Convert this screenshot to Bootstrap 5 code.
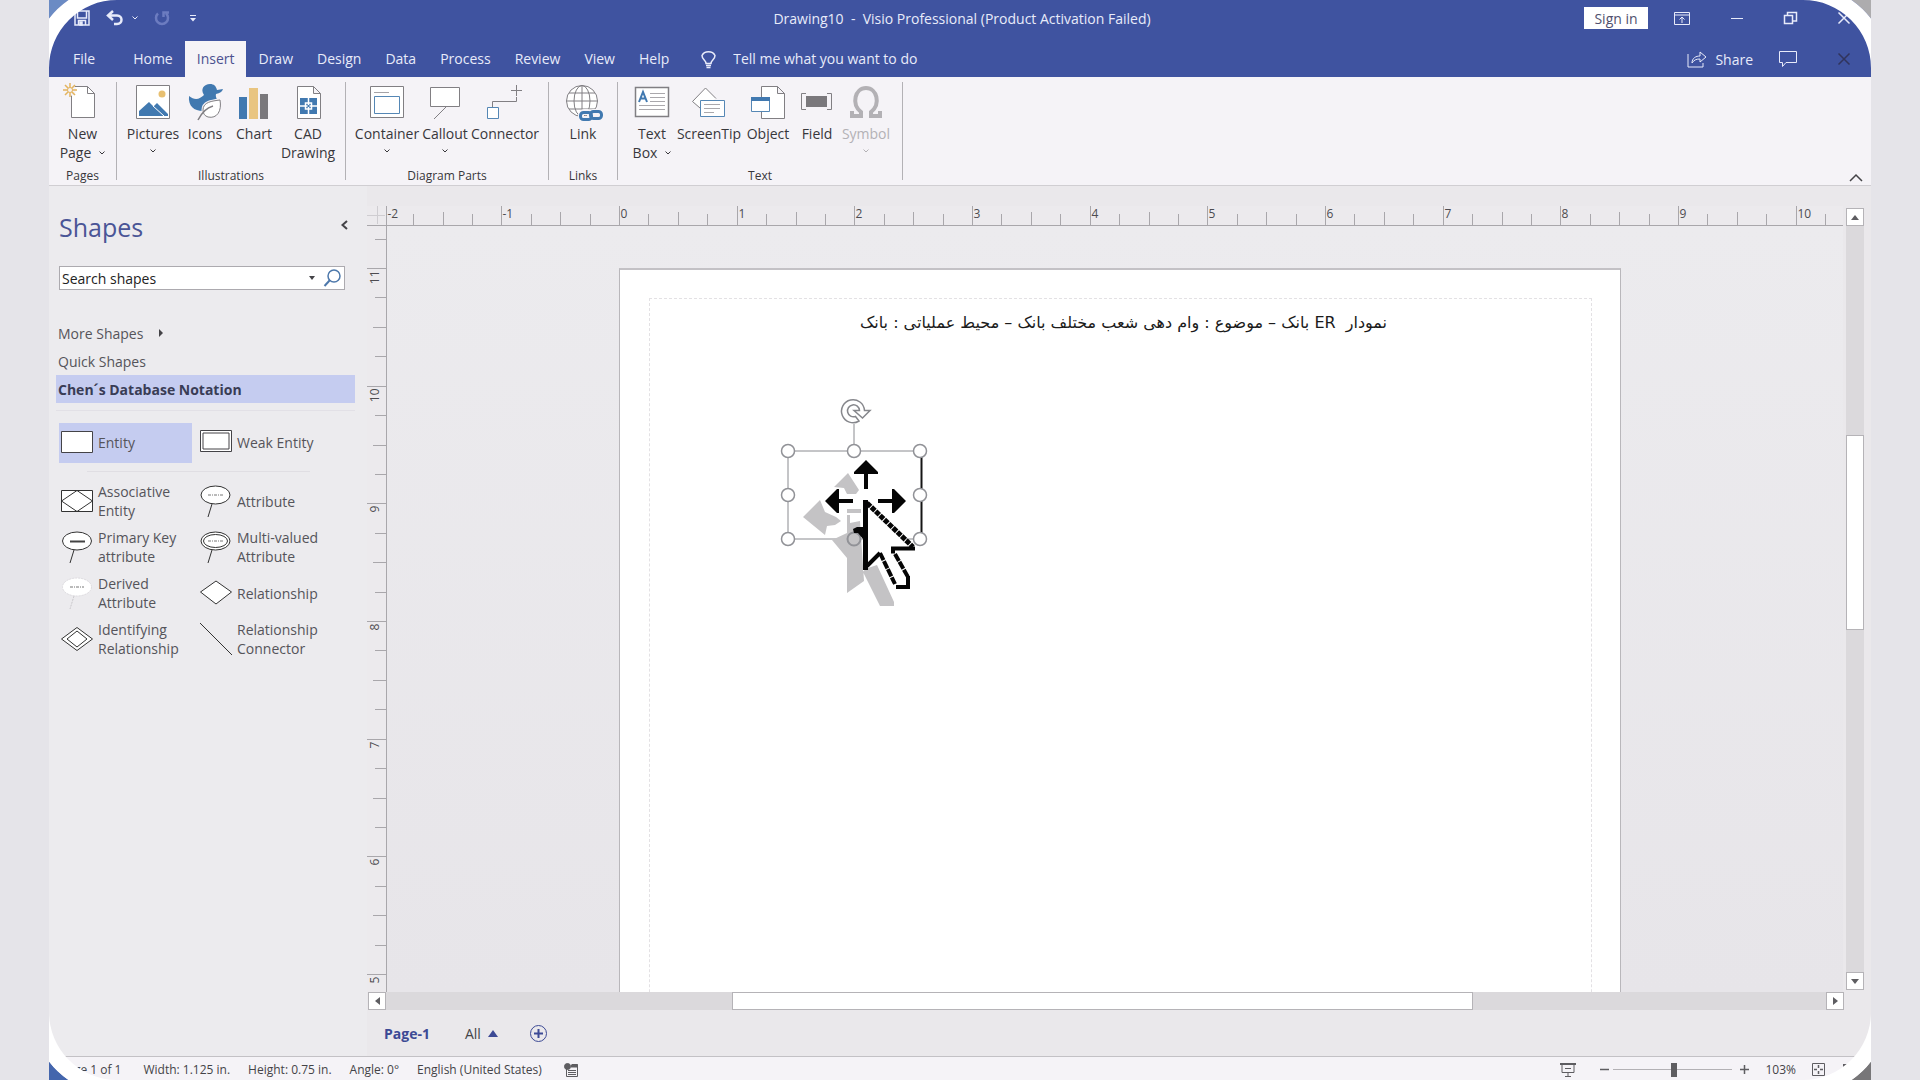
<!DOCTYPE html>
<html lang="en">
<head>
<meta charset="utf-8">
<meta name="viewport" content="width=device-width, initial-scale=1">
<title>Drawing10 - Visio Professional</title>
<link href="https://cdn.jsdelivr.net/npm/bootstrap@5.3.0/dist/css/bootstrap.min.css" rel="stylesheet">
<style>
:root{--brand:#3f53a0;--ribbon:#f5f3f7;--pane:#ecebee;--ink:#444347;--pick:#c5ccf0;--rule:#a9a7ab}
body{font-family:"Open Sans","Noto Sans",sans-serif;font-size:14px;line-height:19px;color:var(--ink);background:#e5e4e9;overflow:hidden}
svg{display:block;flex:none;overflow:visible;fill:none}
button{border:0;background:none;padding:0;color:inherit}
.stage{padding:0 49px;height:100vh}
.app-window{background:var(--pane);overflow:hidden}
.brand{background:var(--brand);color:#e8ebfa}
.title-row{height:41px;padding-bottom:5px}
.side{flex:1 1 0}
.qat{padding-left:25px}
.doc-title{white-space:pre}
.sign-in{background:#fff;color:#50506e;width:64px;height:22px}
.win-tools{padding-right:21px;gap:41px}
.gap-tool{gap:26px}
.tab-row{height:36px}
.tab-row a{color:#e8ebfa;text-decoration:none;padding:0 12px 2px;height:36px;display:flex;align-items:center}
.tab-row a.first{margin:0 14px 0 12px}
.tab-row a.active{background:var(--ribbon);color:#4b5190}
.tell{background:none;border:0;color:#e8ebfa;width:240px;padding:0 0 2px;outline:0}
.tell::placeholder{color:#e8ebfa;opacity:1}
.ribbon{background:var(--ribbon);height:109px;border-bottom:1px solid #d0ced2;padding-top:5px;color:#38373b}
.group{border-right:1px solid #b3b1b5;height:98px}
.tools{height:86px;padding-top:2px}
.tool{display:flex;flex-direction:column;align-items:center;white-space:nowrap;line-height:19px}
.tool svg.pic{width:36px;height:36px;margin-bottom:4px}
.tool svg.chev{margin-top:6px}
.caption{font-size:12px;line-height:16px;text-align:center}
.w44{width:44px}.w48{width:48px}.w50{width:50px}.w54{width:54px}.w60{width:60px}.w66{width:66px}.w70{width:70px}
.shapes-pane{width:318px;padding:25px 12px 0 7px;flex:none}
.pane-title{font-size:25px;line-height:32px;color:#4a5596;font-weight:400;padding:0 7px 0 3px}
.search-box{border:1px solid #acaaaf;background:#fff;width:286px;height:24px;margin:23px 0 0 3px}
.search-box input{border:0;outline:0;padding:0 0 0 2px;color:#222;width:100%;background:none}
.search-box input::placeholder{color:#222;opacity:1}
.stencils{margin-top:29px}
.stencils a{display:flex;align-items:center;height:28px;padding-left:2px;color:#55545a;text-decoration:none}
.stencils a.active{background:var(--pick);color:#393c55;font-weight:700}
.masters{border-top:1px solid #e2e0e6;margin-top:7px;padding:12px 0 0 3px}
.master{width:141px;height:46px;display:flex;align-items:center;gap:5px;padding:0 0 2px 2px;text-align:left;color:#55545a}
.master.top{height:40px}
.master.active{background:var(--pick);width:133px;margin-right:8px}
.divide{height:1px;background:#e0dee3;margin:8px 45px 7px 28px}
.drawing{padding-top:20px;background:#eae8eb}
.ruler-h{height:20px;border-bottom:1px solid var(--rule)}
.ruler-v{width:20px;border-right:1px solid var(--rule)}
.ruler-v,.ruler-h{overflow:hidden;background:#eceaed}
.ruler text{font-size:12px;fill:#4d4c50}
.canvas{position:relative;overflow:hidden;background:linear-gradient(#ecebee,#e7e5e9)}
.sheet{position:absolute;left:232px;top:42px;width:1002px;height:1200px;background:#fff;border:1px solid #b9b7bb;border-top:2px solid #c3c1c5;padding:28px 28px 0 29px}
.margin-box{border:1px dashed #e3e1e4;height:1100px;padding:12px 0 0 6px;text-align:center;color:#1b1b1b;font-family:"DejaVu Sans",sans-serif;font-size:16px;line-height:24px;white-space:pre}
.pick-layer{position:absolute;left:353px;top:154px}
.bar-v{width:18px;margin:0 7px 0 3px;padding:2px 0;flex:none}
.bar-h{height:18px;padding:0 27px 0 1px}
.bar-btn{background:#fff;border:1px solid #b5b3b7;width:18px;height:18px;flex:none;display:flex;align-items:center;justify-content:center}
.track{background:#dbd9dc;flex:1 1 auto}
.grip{background:#fff;border:1px solid #b5b3b7}
.bar-h .grip{width:741px;height:18px;margin-left:346px}
.bar-v .grip{height:195px;width:18px;margin-top:209px}
.page-tabs{height:46px;padding-left:17px}
.page-tabs .now{color:#3d4a95;font-weight:700}
.all-tab{margin-left:35px;gap:7px}
.status{background:var(--ribbon);border-top:1px solid #c3c1c5;height:24px;font-size:12px;padding:2px 12px 0 11px}
.readouts{gap:18px}
.zoom{appearance:none;width:119px;height:16px;background:linear-gradient(#b3b1b5,#b3b1b5) center/100% 1px no-repeat}
.zoom::-webkit-slider-thumb{appearance:none;width:6px;height:14px;background:#5e5d61}
.corner{position:absolute;width:68px;height:68px;pointer-events:none}
.flip-x{transform:scaleX(-1)}.flip-y{transform:scaleY(-1)}.flip-xy{transform:scale(-1)}
.sky{color:#6b8bc4}.fog{color:#adacae}.sea{color:#4466ad}.rock{color:#777678}
.g-pages{width:68px}.g-ill{width:229px}.g-ill .tools{padding-left:6px}.g-parts{width:203px}.g-parts .tools{padding-left:8px}.g-links{width:69px}.g-text{width:285px}.g-text .tools{padding-left:12px}
.shrink-y{min-height:0}.shrink-x{min-width:0}
.dim{color:#b3b1b5}
</style>
<script src="https://cdn.jsdelivr.net/npm/bootstrap@5.3.0/dist/js/bootstrap.bundle.min.js"></script>
</head>
<body>
<svg width="0" height="0" class="position-absolute" aria-hidden="true">
  <symbol id="chev" viewBox="0 0 6 4"><path d="M.5.5 3 3 5.500.5" fill="none" stroke="currentColor"/></symbol>
  <symbol id="ring" viewBox="0 0 68 68"><path d="M0 0H19.500Q8 8 0 18.500Z" fill="currentColor"/><path d="M19.500 0H68A68 68 0 0 0 0 68V18.500Q8 8 19.500 0Z" fill="#fff"/></symbol>
</svg>
<div class="stage">
<div class="app-window position-relative d-flex flex-column h-100">
  <header class="brand">
    <div class="title-row d-flex align-items-center">
      <div class="side qat d-flex align-items-center">
        <button aria-label="Save"><svg width="16" height="16" stroke="#e8ebfa" stroke-width="1.500"><path d="M1 1h14v14H1zM3.500 1v7h9V1M4.500 15v-4.500h7V15"/><path d="M6 12h2v3H6z" fill="#e8ebfa"/></svg></button>
        <button class="ms-3" aria-label="Undo"><svg width="18" height="16" stroke="#e8ebfa" stroke-width="2.500"><path d="M7 1 2 5.500 7 10M2 5.500h9c6 0 6 8.500 0 8.500H8"/></svg></button>
        <button class="ms-2" aria-label="Undo list"><svg width="6" height="4"><use href="#chev"/></svg></button>
        <button class="ms-3" aria-label="Redo"><svg width="16" height="16" stroke="#6c7cc0" stroke-width="2.500"><path d="M4 3.500A6 6 0 1 0 12 3.500M9.500 7V2.500H15"/></svg></button>
        <button class="ms-3 ps-1" aria-label="Customize toolbar"><svg width="6" height="8" stroke="#e8ebfa"><path d="M0 1.500h6"/><path d="m0 4 3 3.500L6 4z" fill="#e8ebfa" stroke="none"/></svg></button>
      </div>
      <div class="doc-title">Drawing10  -  Visio Professional (Product Activation Failed)</div>
      <div class="side win-tools d-flex align-items-center justify-content-end">
        <div class="d-flex align-items-center gap-tool">
          <button class="sign-in">Sign in</button>
          <button aria-label="Ribbon display"><svg width="16" height="13" stroke="#e8ebfa"><path d="M.5.5h15v12H.5zM.5 3h15M8 11V5M5.500 7.500 8 5l2.500 2.500"/></svg></button>
        </div>
        <button aria-label="Minimize"><svg width="12" height="13" stroke="#e8ebfa"><path d="M0 6.500h12"/></svg></button>
        <button aria-label="Restore"><svg width="13" height="12" stroke="#e8ebfa" stroke-width="1.500"><path d="M.5 3.500h8v8h-8zM3.500 3V.5h9V9H9"/></svg></button>
        <button aria-label="Close"><svg width="12" height="12" stroke="#e8ebfa" stroke-width="1.500"><path d="m.5.5 11 11M11.500.5l-11 11"/></svg></button>
      </div>
    </div>
    <nav class="tab-row d-flex align-items-center">
      <a class="first" href="#">File</a><a href="#">Home</a><a class="active" href="#">Insert</a><a href="#">Draw</a><a href="#">Design</a><a href="#">Data</a><a href="#">Process</a><a href="#">Review</a><a href="#">View</a><a href="#">Help</a>
      <label for="tell" class="ms-3 me-3 ps-1" aria-label="Tell me"><svg width="16" height="20" stroke="#e8ebfa" stroke-width="1.500"><path d="M5 14.500c0-3-4-4-4-8a7 6 0 0 1 13 0c0 4-4 5-4 8zM5 16.500h5M5.500 18.500h4"/></svg></label>
      <input class="tell" id="tell" type="text" placeholder="Tell me what you want to do">
      <div class="d-flex align-items-center ms-auto win-tools">
        <div class="d-flex align-items-center gap-tool">
          <button class="d-flex align-items-center gap-2"><svg width="20" height="18" stroke="#e8ebfa"><path d="M1 4v13h15v-4M5 13c0-5 4-7 8-7V2l6 5-6 5V9c-4 0-6 1-8 4z"/></svg>Share</button>
          <button aria-label="Comments"><svg width="18" height="16" stroke="#e8ebfa"><path d="M.5.5h17v11H7l-3.500 4v-4h-3z"/></svg></button>
        </div>
        <button aria-label="Close document"><svg width="12" height="12" stroke="#31345c" stroke-width="1.500"><path d="m.5.5 11 11m0-11-11 11"/></svg></button>
      </div>
    </nav>
  </header>

  <section class="ribbon d-flex position-relative">
    <div class="group g-pages">
      <div class="tools d-flex justify-content-center">
        <button class="tool"><svg class="pic" viewBox="0 0 36 36"><path d="M9.500 3.500h16l7 7v24h-23z" fill="#fff" stroke="#817f83" transform="translate(-2 -1)"/><path d="M23.500 2.500v7h7" stroke="#817f83"/><circle cx="6" cy="6" r="6" fill="#f5f3f7"/><path d="M6-1v14M-1 6h14M1 1l10 10M11 1 1 11" stroke="#e3b45f" stroke-width="1.500"/><circle cx="6" cy="6" r="2.500" fill="#f5f3f7" stroke="#e3b45f"/></svg><span>New</span><span class="d-flex align-items-center gap-2">Page <svg width="6" height="4"><use href="#chev"/></svg></span></button>
      </div>
      <div class="caption">Pages</div>
    </div>
    <div class="group g-ill">
      <div class="tools d-flex">
        <button class="tool w60"><svg class="pic" viewBox="0 0 36 36"><path d="M1.500 1.500h33v33h-33z" fill="#fff" stroke="#817f83"/><circle cx="27" cy="10" r="3.500" fill="#e8c071"/><path d="M4 32v-5l10-9 9 9-5-4 4-4 11 11v2z" fill="#4179b0"/><path d="m18 22 11 10" stroke="#fff"/></svg><span>Pictures</span><svg class="chev" width="6" height="4"><use href="#chev"/></svg></button>
        <button class="tool w44"><svg class="pic" viewBox="0 0 36 36"><path d="M2 12c6 5 11 3 15-1-4-6 0-11 6-11 4 0 6 2 7 6l6-1c-1 3-3 4-7 5-1 3 2 6 2 9-4 5-9 8-15 8C7 27 1 22 2 12z" fill="#4179b0"/><path d="M33 16c2 11-3 19-12 17-3-1-5-3-5-7 0-8 9-9 17-10zM11 36c3-6 8-12 15-14" fill="#fff" stroke="#f5f3f7" stroke-width="3"/><path d="M33 16c2 11-3 19-12 17-3-1-5-3-5-7 0-8 9-9 17-10z" fill="#fff" stroke="#817f83"/><path d="M11 36c3-6 8-12 15-14" stroke="#817f83" stroke-width="1.500"/></svg><span>Icons</span></button>
        <button class="tool w54"><svg class="pic" viewBox="0 0 36 36"><path d="M3 13h8v22H3z" fill="#4179b0"/><path d="M13 4h9v31h-9z" fill="#e9c581"/><path d="M24 10h8v25h-8z" fill="#7a787c"/></svg><span>Chart</span></button>
        <button class="tool w54"><svg class="pic" viewBox="0 0 36 36"><path d="M7.500 2.500h16l7 7v25h-23zM23.500 2.500v7h7" fill="#fff" stroke="#817f83"/><path d="M10 14h17v16H10z" fill="#4179b0"/><path d="M18.500 14v16M10 22h17M15.500 19h6v6h-6z" stroke="#fff" stroke-width="1.500"/><path d="M17.500 21h2v2h-2z" fill="#4179b0"/></svg><span>CAD</span><span>Drawing</span></button>
      </div>
      <div class="caption">Illustrations</div>
    </div>
    <div class="group g-parts">
      <div class="tools d-flex">
        <button class="tool w66"><svg class="pic" viewBox="0 0 36 36"><path d="M1.500 2.500h33v31h-33z" fill="#fff" stroke="#817f83"/><path d="M5 8.500h15" stroke="#a5a3a7"/><path d="M5.500 12.500h25v17h-25z" stroke="#5587b5"/></svg><span>Container</span><svg class="chev" width="6" height="4"><use href="#chev"/></svg></button>
        <button class="tool w50"><svg class="pic" viewBox="0 0 36 36"><path d="M3.500 3.500h29v19h-29z" fill="#fff" stroke="#817f83"/><path d="M19 23 7 35" stroke="#817f83"/></svg><span>Callout</span><svg class="chev" width="6" height="4"><use href="#chev"/></svg></button>
        <button class="tool w70"><svg class="pic" viewBox="0 0 36 36"><path d="M5.500 23v-5.500h24V13M29.500 1v11M24 6.500h11" stroke="#817f83"/><path d="M.5 23.500h11v11H.5z" fill="#fff" stroke="#5587b5"/></svg><span>Connector</span></button>
      </div>
      <div class="caption">Diagram Parts</div>
    </div>
    <div class="group g-links">
      <div class="tools d-flex justify-content-center">
        <button class="tool"><svg class="pic" viewBox="0 0 36 36"><g stroke="#817f83"><circle cx="17" cy="17" r="15.500" fill="#fff"/><ellipse cx="17" cy="17" rx="8" ry="15.500"/><path d="M17 1.500v31M1.500 17h31M4 9h26M4 25h26"/></g><g stroke="#f5f3f7" stroke-width="6"><rect x="16" y="28" width="10" height="7" rx="3"/><rect x="25" y="28" width="10" height="7" rx="3"/></g><g stroke="#4179b0" stroke-width="3"><rect x="15.500" y="28.500" width="11" height="7" rx="3"/><rect x="25.500" y="27.500" width="11" height="7" rx="3"/></g></svg><span>Link</span></button>
      </div>
      <div class="caption">Links</div>
    </div>
    <div class="group g-text">
      <div class="tools d-flex">
        <button class="tool w44"><svg class="pic" viewBox="0 0 36 36"><path d="M1.500 3.500h33v29h-33z" fill="#fff" stroke="#817f83" stroke-width="1.500"/><path d="m5 18 4-10 4 10M6.500 14.500h5" stroke="#4179b0" stroke-width="2"/><path d="M16 9.500h15M16 13.500h15M16 17.500h15M5 21.500h26M5 25.500h26" stroke="#aaa8ac"/></svg><span>Text</span><span class="d-flex align-items-center gap-2">Box <svg width="6" height="4"><use href="#chev"/></svg></span></button>
        <button class="tool w70"><svg class="pic" viewBox="0 0 36 36"><path d="M9 24 1.500 17.500 14.500 4 25 14.500" fill="#fff" stroke="#817f83"/><path d="M9.500 16.500h24v16h-24z" fill="#fff" stroke="#5587b5"/><path d="M13 20.500h16M13 24.500h16M13 28.500h10" stroke="#aaa8ac"/></svg><span>ScreenTip</span></button>
        <button class="tool w48"><svg class="pic" viewBox="0 0 36 36"><path d="M11.500 2.500h16l7 7v25h-23zM27.500 2.500v7h7" fill="#fff" stroke="#817f83"/><path d="M1.500 13.500h18v14h-18z" fill="#fff" stroke="#5587b5"/><path d="M1 15h19" stroke="#4179b0" stroke-width="4"/></svg><span>Object</span></button>
        <button class="tool w50"><svg class="pic" viewBox="0 0 36 36"><path d="M7 9.500H2.500v16H7M28 9.500h4.500v16H28" stroke="#817f83"/><path d="M7 12h21v11H7z" fill="#7a787c"/></svg><span>Field</span></button>
        <button class="tool w48 dim"><svg class="pic" viewBox="0 0 36 36"><path d="M4 27v5h9v-4C3 20 7 4 18 4s15 16 5 24v4h9v-5" stroke="#b3b1b5" stroke-width="4"/></svg><span>Symbol</span><svg class="chev" width="6" height="4"><use href="#chev"/></svg></button>
      </div>
      <div class="caption">Text</div>
    </div>
    <button class="ms-auto align-self-end me-2" aria-label="Collapse ribbon"><svg width="14" height="12" stroke="#444347" stroke-width="1.500"><path d="m1 8 6-6 6 6"/></svg></button>
  </section>

  <main class="d-flex flex-grow-1 shrink-y">
    <aside class="shapes-pane">
      <div class="pane-title d-flex justify-content-between align-items-center">Shapes
        <button class="pb-1" aria-label="Minimize pane"><svg width="7" height="8" stroke="#444347" stroke-width="2"><path d="M6 0 1.500 4 6 8"/></svg></button></div>
      <div class="search-box d-flex align-items-center">
        <input type="text" placeholder="Search shapes" aria-label="Search shapes">
        <svg width="6" height="4"><path d="M0 0h6L3 4z" fill="#444347"/></svg>
        <button class="ps-2 pe-1" aria-label="Search"><svg width="17" height="18" stroke="#4d78ab" stroke-width="1.500"><circle cx="11" cy="7" r="6"/><path d="m7 11-5.500 6" stroke-width="2"/></svg></button>
      </div>
      <nav class="stencils">
        <a href="#">More Shapes <svg class="ms-3" width="4" height="8"><path d="m0 0 4 4-4 4z" fill="#444347"/></svg></a>
        <a href="#">Quick Shapes</a>
        <a href="#" class="active">Chen´s Database Notation</a>
      </nav>
      <div class="masters">
        <div class="d-flex">
          <button class="master top active"><svg width="32" height="24"><path d="M.5 1.500h31v21H.5z" fill="#fff" stroke="#444347"/></svg>Entity</button>
          <button class="master top ps-0"><svg width="32" height="24"><path d="M.5.500h31v21H.5zM3 3h26v16H3z" fill="#fff" stroke="#444347"/></svg>Weak Entity</button>
        </div>
        <div class="divide"></div>
        <div class="d-flex flex-wrap">
          <button class="master"><svg width="32" height="24"><path d="M.5 1.500h31v21H.5zM.5 12 16 1.500 31.500 12 16 22.500z" fill="#fff" stroke="#333"/></svg><span>Associative<br>Entity</span></button>
          <button class="master ps-0"><svg width="32" height="32"><path d="M12 19 8 32" stroke="#333"/><ellipse cx="15.500" cy="10" rx="14.500" ry="9" fill="#fff" stroke="#333"/><path d="M8 10h15" stroke="#777" stroke-dasharray="3 1 1 1"/></svg>Attribute</button>
          <button class="master"><svg width="32" height="32"><path d="M13 19 9 32" stroke="#333"/><ellipse cx="16" cy="10" rx="14.500" ry="9" fill="#fff" stroke="#333"/><path d="M9 10.500h15" stroke="#444" stroke-width="2"/></svg><span>Primary Key<br>attribute</span></button>
          <button class="master ps-0"><svg width="32" height="32"><path d="M12 19 8 32" stroke="#333"/><ellipse cx="15.500" cy="10" rx="14.500" ry="9" fill="#fff" stroke="#333"/><ellipse cx="15.500" cy="10" rx="12" ry="6.500" stroke="#333"/><path d="M8 10h15" stroke="#777" stroke-dasharray="3 1 1 1"/></svg><span>Multi-valued<br>Attribute</span></button>
          <button class="master"><svg width="32" height="32"><path d="M13 19 9 32" stroke="#c9c7cb" stroke-dasharray="2 1"/><ellipse cx="16" cy="10" rx="14.500" ry="9" fill="#fff" stroke="#dddbdf" stroke-dasharray="2 1"/><path d="M9 10h14" stroke="#777" stroke-dasharray="3 1 1 1"/></svg><span>Derived<br>Attribute</span></button>
          <button class="master ps-0"><svg width="32" height="24"><path d="M.5 11 16 0l15.500 11L16 23z" fill="#fff" stroke="#333"/></svg>Relationship</button>
          <button class="master"><svg width="32" height="24"><path d="M.5 12 16 .5 31.500 12 16 23.500zM6 12l10-8 10 8-10 8z" fill="#fff" stroke="#333"/></svg><span>Identifying<br>Relationship</span></button>
          <button class="master ps-0"><svg width="32" height="32"><path d="m0 0 32 32" stroke="#333"/></svg><span>Relationship<br>Connector</span></button>
        </div>
      </div>
    </aside>

    <section class="drawing flex-grow-1 d-flex flex-column shrink-x">
      <div class="d-flex flex-grow-1 shrink-y">
        <div class="flex-grow-1 d-flex flex-column shrink-x">
          <div class="ruler ruler-h"><svg id="rulerH" width="100%" height="20"></svg></div>
          <div class="d-flex flex-grow-1 shrink-y">
            <div class="ruler ruler-v flex-shrink-0"><svg id="rulerV" width="20" height="100%"></svg></div>
            <div class="canvas flex-grow-1">
              <div class="sheet"><div class="margin-box" dir="rtl">نمودار  ER بانک – موضوع : وام دهی شعب مختلف بانک – محیط عملیاتی : بانک</div></div>
              <svg class="pick-layer" width="240" height="240" viewBox="0 0 240 240" aria-label="Selected entity">
                <path d="M114 44v24M48 71h133M48 71v88M48 159h133" stroke="#8a8b90"/><path d="M181.500 71v88" stroke="#151515" stroke-width="2"/>
                <g fill="#c4c3c5"><path d="m108 93 11 17-3 4h-9l-3-6-10-1zM63 137l17-17 5 12 11 5 5 4-6 4-8 1-2 9zM92 160l15-7v-18h3v8l10-2 4 60-17 12v-35zM107 129h14v4h-14zM122 190l15-5 17 37v4h-14z"/></g>
                <g fill="#fff" stroke="#919297" stroke-width="1.500"><circle cx="48" cy="71" r="6.500"/><circle cx="114" cy="71" r="6.500"/><circle cx="180" cy="71" r="6.500"/><circle cx="48" cy="115" r="6.500"/><circle cx="180" cy="115" r="6.500"/><circle cx="48" cy="159" r="6.500"/><circle cx="114" cy="159" r="6.500" fill="#c4c3c5" stroke-width="2"/><circle cx="180" cy="159" r="6.500"/></g>
                <path d="M119 41a11.500 11.500 0 1 1 5.500-10.500H130L122.500 38 114 30.500h5.500a6 6 0 1 0-4 6z" fill="#fff" stroke="#86878c" stroke-width="1.500"/>
                <g fill="#050505"><path d="m126 80 12 12v2h-10v15h-4V94h-10v-2zM85 121l12-12h2v10h14v4H99v10h-2zM166 121l-12-12h-2v10h-14v4h14v10h2zM113 149l4-2h9v12h-3l-5-6h-4z"/></g>
                <path d="M125 121v66l15-14 16 34h13v-13l-14-23h19z" fill="#fff" stroke="#fff" stroke-width="4"/>
                <path d="M125.500 120v70" stroke="#050505" stroke-width="5"/>
                <path d="m127 123 46 44" stroke="#050505" stroke-width="5" stroke-dasharray="5 1"/>
                <path d="M175 168.500h-22v5" stroke="#050505" stroke-width="4"/>
                <path d="m155 174 13 23M140 173l15 31" stroke="#050505" stroke-width="4" stroke-dasharray="8 1"/>
                <path d="M168 196v11h-12M127 186l13-13" stroke="#050505" stroke-width="4"/>
              </svg>
            </div>
          </div>
        </div>
        <div class="bar-v d-flex flex-column"><button class="bar-btn" aria-label="Scroll up"><svg width="8" height="5"><path d="M0 5h8L4 0z" fill="#5e5d61"/></svg></button><div class="track"><div class="grip"></div></div><button class="bar-btn" aria-label="Scroll down"><svg width="8" height="5"><path d="M0 0h8L4 5z" fill="#5e5d61"/></svg></button></div>
      </div>
      <div class="bar-h d-flex"><button class="bar-btn" aria-label="Scroll left"><svg width="5" height="8"><path d="M5 0v8L0 4z" fill="#5e5d61"/></svg></button><div class="track"><div class="grip"></div></div><button class="bar-btn" aria-label="Scroll right"><svg width="5" height="8"><path d="M0 0v8l5-4z" fill="#5e5d61"/></svg></button></div>
      <div class="page-tabs d-flex align-items-center">
        <button class="now">Page-1</button>
        <button class="all-tab d-flex align-items-center">All <svg width="10" height="7"><path d="M0 7h10L5 0z" fill="#3d4a95"/></svg></button>
        <button class="ms-4" aria-label="Insert page"><svg class="ms-2" width="17" height="17" stroke="#3d4a95"><circle cx="8.500" cy="8.500" r="8"/><path d="M8.500 4v9M4 8.500h9" stroke-width="2"/></svg></button>
      </div>
    </section>
  </main>

  <footer class="status d-flex align-items-center">
    <div class="readouts d-flex align-items-center"><span class="pe-1">Page 1 of 1</span><span>Width: 1.125 in.</span><span>Height: 0.75 in.</span><span>Angle: 0°</span><span class="pe-1">English (United States)</span>
    <svg width="15" height="14" stroke="#5e5d61"><path d="M2.500 5v8.500h11v-12H8M4 7.500h8M4 9.500h8M4 11.500h8" /><path d="M7 3h7" stroke-width="3"/><circle cx="3.500" cy="3.500" r="3" fill="#5e5d61"/></svg></div>
    <div class="d-flex align-items-center ms-auto">
      <svg width="16" height="14" stroke="#5e5d61"><path d="M0 1h16" stroke-width="2"/><path d="M2 2v7.500h12V2M5 5.500h6M8 10v3M5 13.500h6"/></svg>
      <button class="ms-4" aria-label="Zoom out"><svg width="9" height="9" stroke="#5e5d61" stroke-width="1.500"><path d="M0 4.500h9"/></svg></button>
      <input class="zoom mx-1" type="range" min="0" max="100" value="51" aria-label="Zoom">
      <button aria-label="Zoom in"><svg class="ms-1" width="9" height="9" stroke="#5e5d61" stroke-width="1.500"><path d="M0 4.500h9M4.500 0v9"/></svg></button>
      <span class="ms-3">103%</span>
      <button class="ms-3" aria-label="Fit page"><svg width="13" height="13" stroke="#5e5d61"><path d="M.5.500h12v12H.5z"/><path d="M6.500 2v3M6.500 8v3M2 6.500h3M8 6.500h3" stroke-width="1.500"/></svg></button>
      <svg class="ms-4" width="10" height="12"><path d="M-6 0h6l-6 5z" fill="#5e5d61"/></svg>
    </div>
  </footer>

  <svg class="corner sky top-0 start-0"><use href="#ring"/></svg>
  <svg class="corner fog flip-x top-0 end-0"><use href="#ring"/></svg>
  <svg class="corner sea flip-y bottom-0 start-0"><use href="#ring"/></svg>
  <svg class="corner rock flip-xy bottom-0 end-0"><use href="#ring"/></svg>
</div>
</div>
<script>
// Rulers: four ticks to the inch, a label on each whole inch
const inch = 353 / 3, h = document.getElementById('rulerH'), v = document.getElementById('rulerV');
let a = '<path d="M0 9.500h18M10.500 0v18M19.500 0v20" stroke="#cfcdd1"/>', b = '';
for (let q = -8; q <= 41; q++) {
  const x = Math.max(19, Math.round(252 + q * inch / 4)) + .5, top = q % 4 === 0 ? 0 : q % 2 === 0 ? 6 : 8;
  a += `<path d="M${x} ${top}V20" stroke="#a9a7ab"/>`;
  if (q % 4 === 0) a += `<text x="${x + 1}" y="12">${q / 4}</text>`;
}
for (let q = -1; q <= 25; q++) {
  const y = Math.round(42 + q * inch / 4) + .5, left = q % 4 === 0 ? 0 : q % 2 === 0 ? 6 : 8;
  b += `<path d="M${left} ${y}H20" stroke="#a9a7ab"/>`;
  if (q % 4 === 0) b += `<text transform="translate(12 ${y + 2}) rotate(-90)" text-anchor="end">${11 - q / 4}</text>`;
}
h.innerHTML = a; v.innerHTML = b;
</script>
</body>
</html>
